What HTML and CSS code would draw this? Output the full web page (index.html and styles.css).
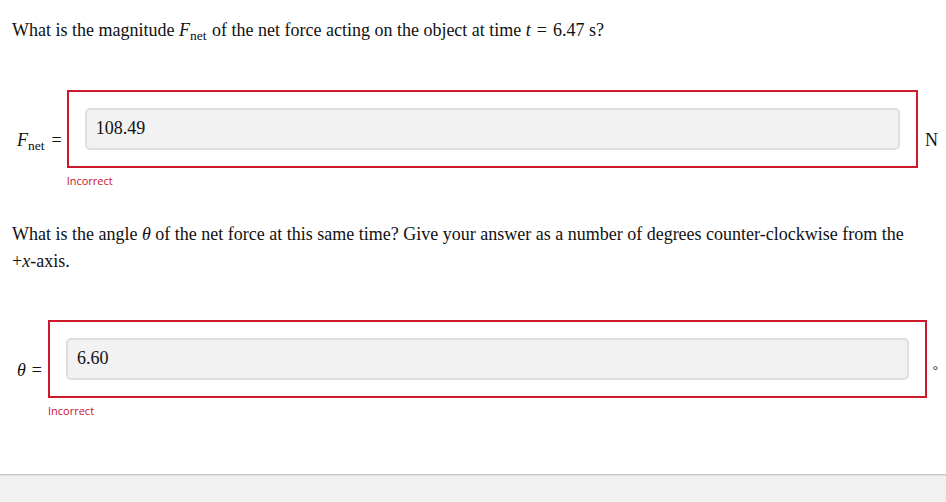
FILE: index.html
```html
<!DOCTYPE html>
<html>
<head>
<meta charset="utf-8">
<link rel="stylesheet" href="styles.css">
</head>
<body>
<div class="page">
  <p class="question q1">What is the magnitude <span class="math"><i class="mi">F</i><sub>net</sub></span> of the net force acting on the object at time <span class="math"><i>t</i><span class="rel">=</span>6.47 s</span>?</p>

  <div class="answer-row row1">
    <div class="label"><span class="math"><i class="mi">F</i><sub>net</sub><span class="rel rel-end">=</span></span></div>
    <div class="answer-col">
      <div class="answer-box">
        <div class="input">108.49</div>
      </div>
      <div class="feedback">Incorrect</div>
    </div>
    <div class="unit">N</div>
  </div>

  <p class="question q2">What is the angle <span class="math"><i>θ</i></span> of the net force at this same time? Give your answer as a number of degrees counter-clockwise from the <span class="nowrap"><span class="math">+<i>x</i></span>-axis.</span></p>

  <div class="answer-row row2">
    <div class="label"><span class="math"><i>θ</i><span class="rel rel-end">=</span></span></div>
    <div class="answer-col">
      <div class="answer-box">
        <div class="input">6.60</div>
      </div>
      <div class="feedback">Incorrect</div>
    </div>
    <div class="unit deg">°</div>
  </div>
</div>
<div class="footer"></div>
</body>
</html>
```

FILE: styles.css
```css
html, body {
  margin: 0;
  padding: 0;
  background: #ffffff;
}

body {
  font-family: "Liberation Serif", "Times New Roman", serif;
  font-size: 18px;
  color: #111;
}

.page {
  padding: 17px 8px 0 12px;
  height: 459px;
  box-sizing: border-box;
}

.question {
  margin: 0;
  line-height: 27px;
}

.nowrap {
  white-space: nowrap;
}

.math i {
  font-style: italic;
}

.math .mi {
  padding-right: 1px;
}

.math sub {
  font-size: 13.5px;
  vertical-align: -4px;
  line-height: 0;
  margin-left: -1px;
  padding-right: 1px;
}

.rel {
  margin: 0 6px;
}

.rel-end {
  margin-right: 0;
}

.row1 {
  margin-top: 46px;
}

.q2 {
  margin-top: 33px;
}

.row2 {
  margin-top: 45px;
}

.answer-row {
  display: flex;
  align-items: center;
}

.label {
  padding-left: 5px;
  margin-right: 5px;
  white-space: nowrap;
  line-height: 20px;
  position: relative;
  top: 1px;
}

.row2 .label {
  margin-right: 6px;
}

.answer-col {
  flex: 1;
  display: flex;
  flex-direction: column;
}

.answer-box {
  border: 2px solid #cc1a2c;
  padding: 16px;
}

.input {
  box-sizing: content-box;
  border: 2px solid #dfdfdf;
  border-radius: 5px;
  background: #f2f2f2;
  padding: 0 9px 2px;
  display: flex;
  align-items: center;
  line-height: 20px;
  height: 36px;
}

.feedback {
  font-family: "Open Sans", "Noto Sans", sans-serif;
  font-size: 11px;
  color: #c8102e;
  margin-top: 6px;
  line-height: 14px;
}

.unit {
  margin-left: 7px;
  position: relative;
  top: 1px;
}

.unit.deg {
  margin-left: 6px;
  top: 1px;
  font-size: 13px;
}

.footer {
  border-top: 1px solid #c6c6c6;
  box-shadow: inset 0 1px 0 #dedede;
  background: #f1f1f1;
  height: 60px;
  margin-top: 15px;
}
```
